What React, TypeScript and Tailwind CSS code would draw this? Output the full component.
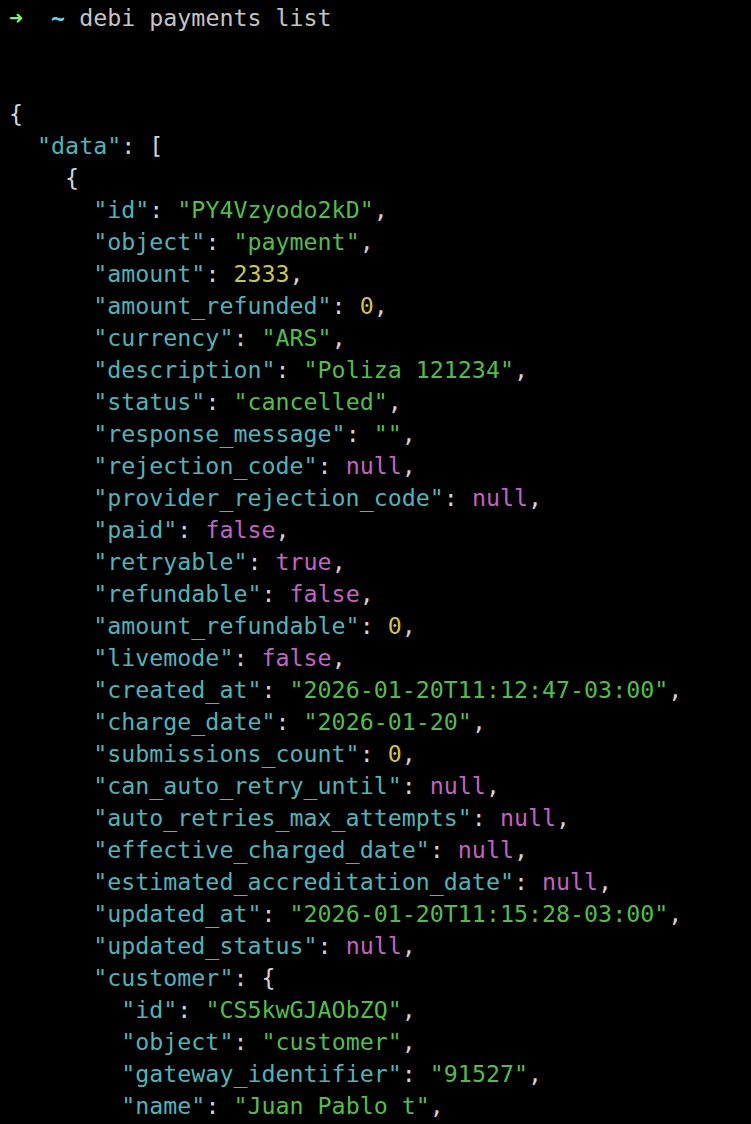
type Tok = { t: string; c?: 'key' | 'str' | 'num' | 'kw' | 'p' }

const colors: Record<string, string> = {
  key: 'text-[#4db5b8]',
  str: 'text-[#4fbf46]',
  num: 'text-[#cdc546]',
  kw: 'text-[#c462c6]',
  p: 'text-[#d2d2d2]',
}

type Line = { indent: number; toks: Tok[] }

const kv = (indent: number, key: string, value: string, kind: 'str' | 'num' | 'kw', comma = true): Line => ({
  indent,
  toks: [
    { t: `"${key}"`, c: 'key' },
    { t: ': ', c: 'p' },
    { t: kind === 'str' ? `"${value}"` : value, c: kind },
    ...(comma ? [{ t: ',', c: 'p' as const }] : []),
  ],
})

const lines: Line[] = [
  { indent: 0, toks: [{ t: '{', c: 'p' }] },
  { indent: 1, toks: [{ t: '"data"', c: 'key' }, { t: ': [', c: 'p' }] },
  { indent: 2, toks: [{ t: '{', c: 'p' }] },
  kv(3, 'id', 'PY4Vzyodo2kD', 'str'),
  kv(3, 'object', 'payment', 'str'),
  kv(3, 'amount', '2333', 'num'),
  kv(3, 'amount_refunded', '0', 'num'),
  kv(3, 'currency', 'ARS', 'str'),
  kv(3, 'description', 'Poliza 121234', 'str'),
  kv(3, 'status', 'cancelled', 'str'),
  kv(3, 'response_message', '', 'str'),
  kv(3, 'rejection_code', 'null', 'kw'),
  kv(3, 'provider_rejection_code', 'null', 'kw'),
  kv(3, 'paid', 'false', 'kw'),
  kv(3, 'retryable', 'true', 'kw'),
  kv(3, 'refundable', 'false', 'kw'),
  kv(3, 'amount_refundable', '0', 'num'),
  kv(3, 'livemode', 'false', 'kw'),
  kv(3, 'created_at', '2026-01-20T11:12:47-03:00', 'str'),
  kv(3, 'charge_date', '2026-01-20', 'str'),
  kv(3, 'submissions_count', '0', 'num'),
  kv(3, 'can_auto_retry_until', 'null', 'kw'),
  kv(3, 'auto_retries_max_attempts', 'null', 'kw'),
  kv(3, 'effective_charged_date', 'null', 'kw'),
  kv(3, 'estimated_accreditation_date', 'null', 'kw'),
  kv(3, 'updated_at', '2026-01-20T11:15:28-03:00', 'str'),
  kv(3, 'updated_status', 'null', 'kw'),
  { indent: 3, toks: [{ t: '"customer"', c: 'key' }, { t: ': {', c: 'p' }] },
  kv(4, 'id', 'CS5kwGJAObZQ', 'str'),
  kv(4, 'object', 'customer', 'str'),
  kv(4, 'gateway_identifier', '91527', 'str'),
  kv(4, 'name', 'Juan Pablo t', 'str'),
]

export default function App() {
  return (
    <div className="w-[751px] h-[1124px] overflow-hidden bg-black pl-[9px] pt-0.5 font-['DejaVu_Sans_Mono',monospace] text-[23.3px] leading-[32px] whitespace-pre">
      <div>
        <span className="text-[#7ef27a] font-bold">➜</span>
        <span>{'  '}</span>
        <span className="text-[#5fd4e4] font-bold">~</span>
        <span className="text-[#c4c4c4]"> debi payments list</span>
      </div>
      <div>{' '}</div>
      <div>{' '}</div>
      {lines.map((l, i) => (
        <div key={i}>
          <span>{'  '.repeat(l.indent)}</span>
          {l.toks.map((tk, j) => (
            <span key={j} className={colors[tk.c ?? 'p']}>
              {tk.t}
            </span>
          ))}
        </div>
      ))}
    </div>
  )
}
